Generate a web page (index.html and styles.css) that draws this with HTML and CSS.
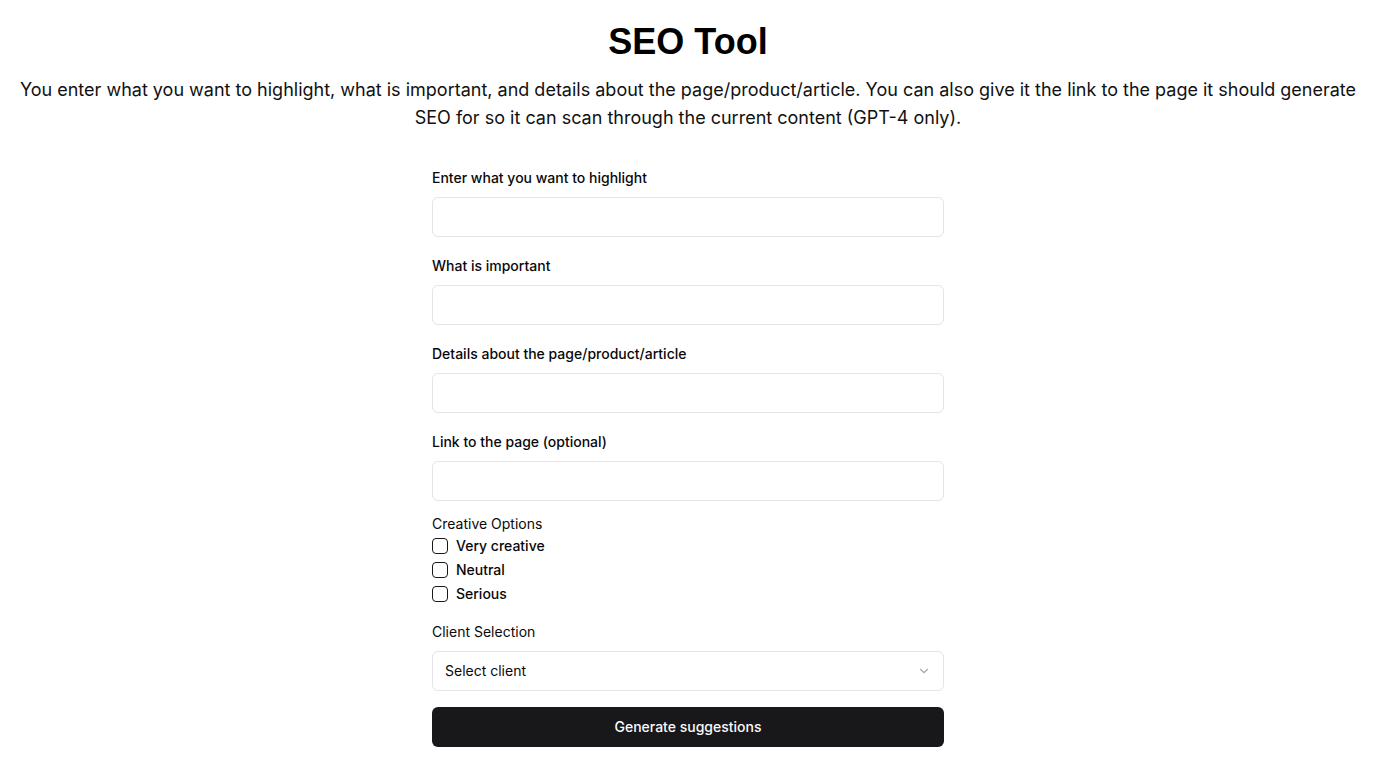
FILE: index.html
```html
<!DOCTYPE html>
<html lang="en">
<head>
<meta charset="utf-8">
<title>SEO Tool</title>
<link rel="stylesheet" href="styles.css">
</head>
<body>
<main class="page">
  <h1 class="title">SEO Tool</h1>
  <p class="intro">You enter what you want to highlight, what is important, and details about the page/product/article. You can also give it the link to the page it should generate SEO for so it can scan through the current content (GPT-4 only).</p>
  <form class="form">
    <div class="field">
      <label class="label">Enter what you want to highlight</label>
      <input class="input" type="text">
    </div>
    <div class="field">
      <label class="label">What is important</label>
      <input class="input" type="text">
    </div>
    <div class="field">
      <label class="label">Details about the page/product/article</label>
      <input class="input" type="text">
    </div>
    <div class="field">
      <label class="label">Link to the page (optional)</label>
      <input class="input" type="text">
    </div>
    <div class="options">
      <div class="options-title">Creative Options</div>
      <label class="check"><span class="box"></span>Very creative</label>
      <label class="check"><span class="box"></span>Neutral</label>
      <label class="check"><span class="box"></span>Serious</label>
    </div>
    <div class="field client">
      <div class="options-title">Client Selection</div>
      <div class="select">
        <span>Select client</span>
        <svg width="14" height="14" viewBox="0 0 24 24" fill="none" stroke="#71717a" stroke-width="2" stroke-linecap="round" stroke-linejoin="round"><path d="m6 9 6 6 6-6"/></svg>
      </div>
    </div>
    <button class="btn" type="button">Generate suggestions</button>
  </form>
</main>
</body>
</html>
```
FILE: styles.css
```css
* { box-sizing: border-box; }
html, body { margin: 0; padding: 0; background: #fff; }
body { font-family: Inter, "Noto Sans", sans-serif; color: #09090b; }
.page { display: flex; flex-direction: column; align-items: center; padding: 22px 16px 0; }
.title { margin: 0; font-family: "Liberation Sans", Arial, sans-serif; font-weight: 700; font-size: 36px; line-height: 40px; color: #000; }
.intro { margin: 14px 0 0; font-size: 18px; line-height: 28px; text-align: center; color: #111; }
.form { width: 512px; margin-top: 36px; display: flex; flex-direction: column; }
.field { display: flex; flex-direction: column; gap: 9px; margin-bottom: 19px; }
.label { font-size: 14px; line-height: 20px; font-weight: 500; }
.input { height: 40px; border: 1px solid #e4e4e7; border-radius: 6px; background: #fff; padding: 0 12px; font: inherit; font-size: 14px; outline: none; }
.options { display: flex; flex-direction: column; margin-top: -6px; margin-bottom: 16px; }
.options-title { font-size: 14px; line-height: 20px; font-weight: 400; }
.check { display: flex; align-items: center; gap: 8px; height: 24px; font-size: 14px; line-height: 20px; font-weight: 500; padding-bottom: 1px; }
.box { width: 16px; height: 16px; border: 1px solid #18181b; border-radius: 4px; display: inline-block; flex: none; margin-top: 1px; }
.client { margin-bottom: 16px; }
.select { height: 40px; border: 1px solid #e4e4e7; border-radius: 6px; padding: 0 12px 1px; display: flex; align-items: center; justify-content: space-between; font-size: 14px; }
.select svg { opacity: 0.6; margin-top: 1px; }
.btn { height: 40px; border: 0; border-radius: 6px; background: #18181b; color: #fafafa; font: inherit; font-size: 14px; font-weight: 500; cursor: pointer; padding: 0 16px 2px; }
```
